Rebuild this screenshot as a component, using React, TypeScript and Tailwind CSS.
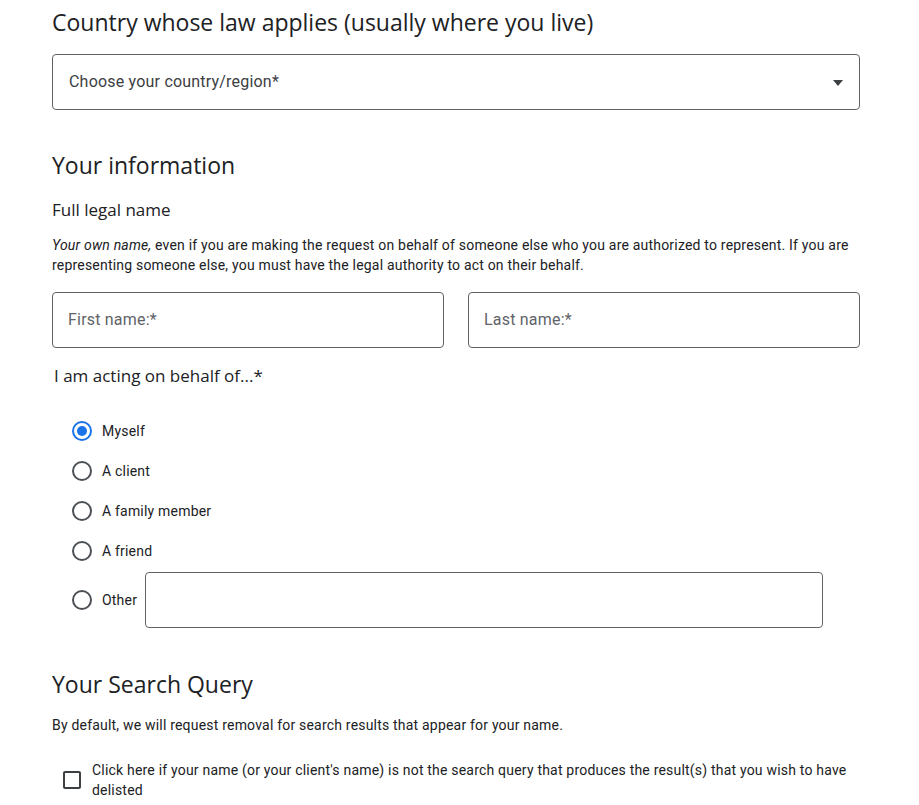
import React from "react";

const heading = "font-['Open_Sans',sans-serif] text-[#202124]";
const body = "font-['Roboto',sans-serif] tracking-[0.2px]";

function Radio({ checked }: { checked?: boolean }) {
  return checked ? (
    <span className="flex h-[20px] w-[20px] shrink-0 items-center justify-center rounded-full border-2 border-[#1a73e8]">
      <span className="h-[10px] w-[10px] rounded-full bg-[#1a73e8]" />
    </span>
  ) : (
    <span className="h-[20px] w-[20px] shrink-0 rounded-full border-2 border-[#4d5156]" />
  );
}

function RadioRow({ label, checked }: { label: string; checked?: boolean }) {
  return (
    <div className="flex h-[40px] items-center pl-[20px]">
      <Radio checked={checked} />
      <span className={`${body} ml-[10px] text-[14px] text-[#202124]`}>{label}</span>
    </div>
  );
}

export default function App() {
  return (
    <div className="min-h-[805px] w-full bg-white">
      <div className="ml-[52px] w-[808px] pt-[6px]">
        <h1 className={`${heading} text-[23px] leading-[32px]`}>
          Country whose law applies (usually where you live)
        </h1>

        <div className="mt-[16px] flex h-[56px] items-center justify-between rounded-[4px] border border-[#5f6368] pl-[16px] pr-[15px]">
          <span className={`${body} text-[16px] text-[#3c4043]`}>Choose your country/region*</span>
          <svg width="12" height="6" viewBox="0 0 12 6" className="mt-[2px]">
            <path d="M1 0 L11 0 L6 6 Z" fill="#3c4043" />
          </svg>
        </div>

        <h2 className={`${heading} mt-[39px] text-[23px] leading-[32px]`}>Your information</h2>

        <h3 className={`${heading} mt-[17px] text-[17px] leading-[24px]`}>Full legal name</h3>

        <p className={`${body} mt-[13px] text-[14px] leading-[20px] text-[#202124]`}>
          <em>Your own name,</em> even if you are making the request on behalf of someone else who you are
          authorized to represent. If you are representing someone else, you must have the legal authority to
          act on their behalf.
        </p>

        <div className="mt-[17px] grid grid-cols-2 gap-[24px]">
          <div className="flex h-[56px] items-center rounded-[4px] border border-[#5f6368] pl-[15px]">
            <span className={`${body} text-[16px] text-[#5f6368]`}>First name:*</span>
          </div>
          <div className="flex h-[56px] items-center rounded-[4px] border border-[#5f6368] pl-[15px]">
            <span className={`${body} text-[16px] text-[#5f6368]`}>Last name:*</span>
          </div>
        </div>

        <h3 className={`${heading} ml-[2px] mt-[16px] text-[17px] leading-[24px]`}>
          I am acting on behalf of...*
        </h3>

        <div className="mt-[23px] flex flex-col">
          <RadioRow label="Myself" checked />
          <RadioRow label="A client" />
          <RadioRow label="A family member" />
          <RadioRow label="A friend" />
          <div className="mt-[1px] flex h-[56px] items-center pl-[20px]">
            <Radio />
            <span className={`${body} ml-[10px] text-[14px] text-[#202124]`}>Other</span>
            <div className="ml-[8px] h-[56px] w-[678px] rounded-[4px] border border-[#5f6368]" />
          </div>
        </div>

        <h2 className={`${heading} mt-[40px] text-[23px] leading-[32px]`}>Your Search Query</h2>

        <p className={`${body} mt-[15px] text-[14px] leading-[20px] text-[#202124]`}>
          By default, we will request removal for search results that appear for your name.
        </p>

        <div className="mt-[25px] flex items-center pl-[11px]">
          <span className="h-[18px] w-[18px] shrink-0 rounded-[2px] border-2 border-[#3c4043]" />
          <span className={`${body} ml-[11px] w-[770px] text-[14px] leading-[20px] text-[#202124]`}>
            Click here if your name (or your client's name) is not the search query that produces the
            result(s) that you wish to have delisted
          </span>
        </div>
      </div>
    </div>
  );
}
